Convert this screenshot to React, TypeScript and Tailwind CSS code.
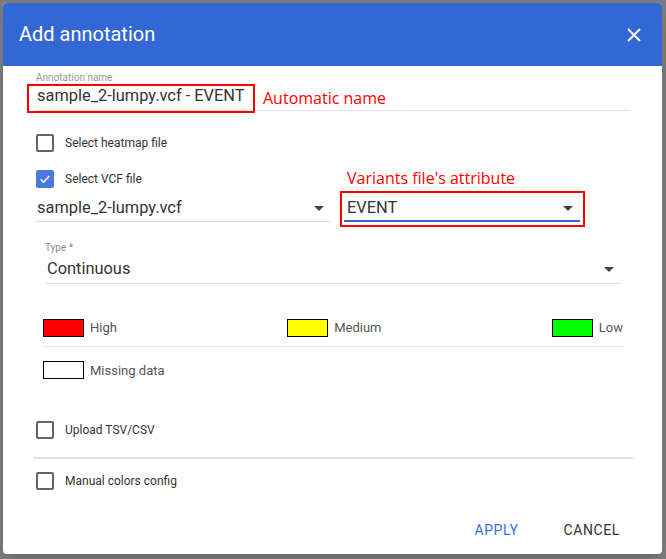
import React from "react";

const Arrow = () => (
  <svg width="10" height="5" viewBox="0 0 10 5" className="shrink-0">
    <path d="M0 0 L10 0 L5 5 Z" fill="#444" />
  </svg>
);

const Checkbox = ({ label, checked = false }: { label: string; checked?: boolean }) => (
  <div className="flex items-center h-[18px]">
    {checked ? (
      <div className="w-[18px] h-[18px] rounded-[2px] bg-[#4a7bdc] flex items-center justify-center">
        <svg width="14" height="14" viewBox="0 0 24 24">
          <path d="M4.5 12.5 L9.5 17.5 L19.5 7" stroke="white" strokeWidth="2.6" fill="none" />
        </svg>
      </div>
    ) : (
      <div className="w-[18px] h-[18px] rounded-[2px] border-2 border-[#666]" />
    )}
    <span className="ml-[11px] text-[12px] text-[#333]">{label}</span>
  </div>
);

const Swatch = ({ color, label }: { color: string; label: string }) => (
  <div className="flex items-center">
    <div className={`w-[41px] h-[18px] border border-black ${color}`} />
    <span className="ml-[6px] text-[13px] text-[#555]">{label}</span>
  </div>
);

const App = () => {
  return (
    <div
      className="w-[666px] h-[559px] bg-[#7b7b7b] pt-[3px] pl-[3px] overflow-hidden"
      style={{ fontFamily: "Roboto, 'Liberation Sans', sans-serif" }}
    >
      <div className="w-[659px] h-[551px] bg-white rounded-[4px] flex flex-col shadow-lg">
        {/* header */}
        <div className="h-[63px] bg-[#3367d6] rounded-t-[4px] flex items-center justify-between pl-[16px] pr-[21px]">
          <h1 className="text-white text-[20px] pb-[1px]">Add annotation</h1>
          <svg width="14" height="14" viewBox="0 0 14 14">
            <path d="M1 1 L13 13 M13 1 L1 13" stroke="white" strokeWidth="2" />
          </svg>
        </div>

        <div className="flex flex-col pl-[33px] pr-[29px]">
          {/* annotation name */}
          <div className="mt-[6px] text-[10px] leading-[11px] text-[#999]">Annotation name</div>
          <div className="relative h-[28px] border-b border-[#ddd] flex items-center w-[594px]">
            <span className="text-[16.4px] text-[#333] pl-[1px]">sample_2-lumpy.vcf - EVENT</span>
            <div className="absolute left-[-9px] top-[1px] w-[228px] h-[29px] border-2 border-[#f00]" />
            <span
              className="absolute left-[227px] top-[3px] text-[16px] text-[#f00]"
              style={{ fontFamily: "'Open Sans', sans-serif" }}
            >
              Automatic name
            </span>
          </div>

          <div className="mt-[23px]">
            <Checkbox label="Select heatmap file" />
          </div>
          <div className="mt-[18px]">
            <Checkbox label="Select VCF file" checked />
          </div>

          {/* selects */}
          <div className="flex mt-[8px]">
            <div className="w-[295px] h-[26px] border-b border-[#ddd] flex items-center justify-between pr-[7px]">
              <span className="text-[16.4px] text-[#333] pl-[1px]">sample_2-lumpy.vcf</span>
              <Arrow />
            </div>
            <div className="relative ml-[13px] w-[236px] h-[26px] border-b-2 border-[#3367d6] flex items-center justify-between pr-[7px]">
              <span className="text-[16.4px] text-[#333] pl-[3px]">EVENT</span>
              <Arrow />
              <div className="absolute left-[-4px] top-[-5px] w-[245px] h-[36px] border-2 border-[#f00]" />
              <span
                className="absolute left-[3px] top-[-30px] text-[16px] text-[#f00] whitespace-nowrap"
                style={{ fontFamily: "'Open Sans', sans-serif" }}
              >
                Variants file's attribute
              </span>
            </div>
          </div>

          {/* type */}
          <div className="ml-[9px] w-[576px] flex flex-col">
            <div className="mt-[20px] text-[10px] leading-[11px] text-[#888]">Type *</div>
            <div className="mt-[3px] h-[28px] border-b border-[#ddd] flex items-center justify-between pr-[7px]">
              <span className="text-[16.4px] text-[#333] pl-[2px]">Continuous</span>
              <Arrow />
            </div>
          </div>

          {/* colors */}
          <div className="ml-[7px] w-[580px] flex flex-col">
            <div className="mt-[34px] flex justify-between">
              <Swatch color="bg-[#ff0000]" label="High" />
              <Swatch color="bg-[#ffff00]" label="Medium" />
              <Swatch color="bg-[#00ff00]" label="Low" />
            </div>
            <div className="mt-[8px] border-t border-[#e5e5e5]" />
            <div className="mt-[14px]">
              <Swatch color="bg-white" label="Missing data" />
            </div>
          </div>

          <div className="mt-[41px]">
            <Checkbox label="Upload TSV/CSV" />
          </div>
          <div className="mt-[18px] -ml-[3px] w-[600px] border-t-2 border-[#e0e0e0]" />
          <div className="mt-[13px]">
            <Checkbox label="Manual colors config" />
          </div>
        </div>

        {/* actions */}
        <div className="mt-auto mb-[6px] flex justify-end gap-[13px] pr-[26px]">
          <button className="h-[36px] px-[16px] text-[14px] tracking-[0.6px] text-[#3a6fd8]">APPLY</button>
          <button className="h-[36px] px-[16px] text-[14px] tracking-[0.6px] text-[#333]">CANCEL</button>
        </div>
      </div>
    </div>
  );
};

export default App;
